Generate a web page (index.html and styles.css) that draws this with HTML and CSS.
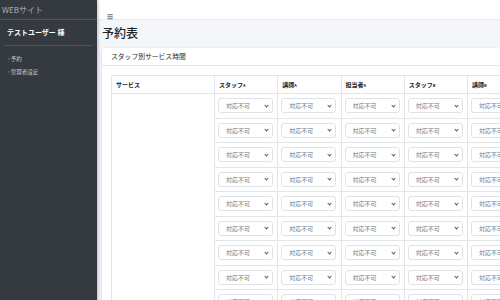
FILE: index.html
```html
<!DOCTYPE html>
<html lang="ja">
<head>
    <meta charset="UTF-8">
    <meta name="viewport" content="width=device-width, initial-scale=1.0">
    <title>予約表</title>
    <link rel="stylesheet" href="styles.css">
</head>
<body>
    <aside class="sidebar">
        <div class="brand">WEBサイト</div>
        <div class="user">テストユーザー 様</div>
        <ul class="nav">
            <li>予約</li>
            <li>管理者設定</li>
        </ul>
    </aside>

    <div class="main">
        <header class="topbar">
            <span class="menu-btn">&#9776;</span>
        </header>

        <div class="content">
            <h1>予約表</h1>
            <div class="card">
                <div class="card-header">スタッフ別サービス時間</div>
                <div class="card-body">
                    <table class="schedule">
                        <colgroup>
                            <col class="col-service">
                            <col class="col-staff"><col class="col-staff"><col class="col-staff">
                            <col class="col-staff"><col class="col-staff">
                        </colgroup>
                        <thead>
                            <tr>
                                <th>サービス</th>
                                <th>スタッフ<small>A</small></th>
                                <th>講師<small>A</small></th>
                                <th>担当者<small>A</small></th>
                                <th>スタッフ<small>B</small></th>
                                <th>講師<small>B</small></th>
                            </tr>
                        </thead>
                        <tbody id="rows"></tbody>
                    </table>
                </div>
            </div>
        </div>
    </div>

    <script>
        // 行を生成する
        const tbody = document.getElementById('rows');
        const rowCount = 10;
        const colCount = 5;

        for (let r = 0; r < rowCount; r++) {
            const tr = document.createElement('tr');
            if (r === 0) {
                const service = document.createElement('td');
                service.className = 'service';
                service.rowSpan = rowCount;
                tr.appendChild(service);
            }
            for (let c = 0; c < colCount; c++) {
                const td = document.createElement('td');
                td.innerHTML = '<span class="select-wrap"><select><option>対応不可</option><option>対応可</option></select></span>';
                tr.appendChild(td);
            }
            tbody.appendChild(tr);
        }
    </script>
</body>
</html>
```

FILE: styles.css
```css
body {
    margin: 0;
    height: 300px;
    overflow: hidden;
    display: flex;
    font-family: "Noto Sans CJK JP", "Noto Sans", sans-serif;
    color: #212529;
    background-color: #f4f6f9;
}
.sidebar {
    width: 97px;
    flex-shrink: 0;
    background-color: #343a40;
    box-shadow: 1px 0 3px rgba(0, 0, 0, 0.25);
    position: relative;
    z-index: 2;
}
.brand {
    height: 20px;
    line-height: 19px;
    padding-left: 2px;
    font-size: 8px;
    color: #aab0b7;
    border-bottom: 1px solid #4b545c;
    box-sizing: border-box;
}
.user {
    margin: 0 4px;
    padding: 7px 3px 0;
    height: 26px;
    box-sizing: border-box;
    font-size: 7px;
    font-weight: bold;
    color: #fff;
    border-bottom: 1px solid #4b545c;
}
.nav {
    list-style: none;
    margin: 0;
    padding: 7px 0 0 8px;
}
.nav li {
    font-size: 5.5px;
    color: #c2c7d0;
    height: 13px;
    line-height: 13px;
}
.nav li::before {
    content: "›";
    margin-right: 1px;
}
.main {
    flex: 1;
    min-width: 0;
    overflow: hidden;
}
.topbar {
    height: 20px;
    background-color: #fff;
    border-bottom: 1px solid #e9ecef;
    box-sizing: border-box;
    padding-left: 10px;
}
.menu-btn {
    font-size: 6px;
    line-height: 18px;
    color: #6c757d;
}
.content {
    padding: 0 5px;
}
h1 {
    margin: 0;
    padding: 4px 0 0;
    height: 28px;
    box-sizing: border-box;
    font-size: 12px;
    font-weight: 500;
    line-height: 18px;
}
.card {
    width: max-content;
    background-color: #fff;
    border-radius: 2px;
    box-shadow: 0 0 1px rgba(0, 0, 0, 0.2), 0 1px 2px rgba(0, 0, 0, 0.15);
}
.card-header {
    height: 17px;
    padding-left: 9px;
    font-size: 6.8px;
    line-height: 17px;
    border-bottom: 1px solid #e5e7ea;
}
.card-body {
    padding: 9px 9px;
}
.schedule {
    border-collapse: collapse;
    table-layout: fixed;
    border: 1px solid #e3e6e9;
}
.col-service {
    width: 103px;
}
.col-staff {
    width: 63.25px;
}
.schedule th {
    height: 17px;
    padding: 0 4px;
    text-align: left;
    font-size: 6px;
    font-weight: bold;
    border-left: 1px solid #e3e6e9;
    border-bottom: 1px solid #e3e6e9;
    white-space: nowrap;
}
.schedule th:first-child {
    padding-left: 4px;
}
.schedule th small {
    font-size: 4px;
}
.schedule td {
    padding: 4.25px 3px;
    border-left: 1px solid #e3e6e9;
    border-top: 1px solid #e3e6e9;
}
.schedule td.service {
    border-top: none;
}
.select-wrap {
    position: relative;
    display: block;
    width: 55px;
}
.select-wrap::after {
    content: "";
    position: absolute;
    right: 5px;
    top: 5.5px;
    width: 2px;
    height: 2px;
    border-right: 1px solid #555;
    border-bottom: 1px solid #555;
    transform: rotate(45deg);
    pointer-events: none;
}
select {
    appearance: none;
    -webkit-appearance: none;
    display: block;
    width: 55px;
    height: 15px;
    padding: 0 0 0 7px;
    font-family: "Noto Sans CJK JP", sans-serif;
    font-size: 6px;
    color: #6c757d;
    background-color: #fff;
    border: 1px solid #dfe2e6;
    border-radius: 3px;
}
```
